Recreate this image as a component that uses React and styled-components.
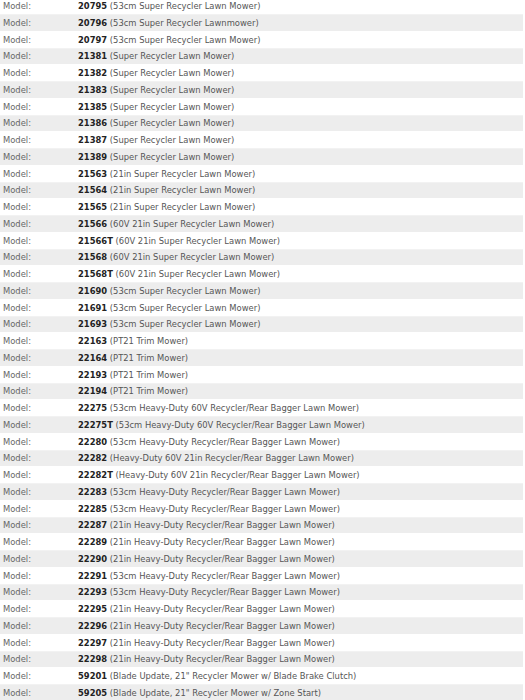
import React from 'react';
import styled, { createGlobalStyle } from 'styled-components';

const GlobalStyle = createGlobalStyle`
    body {
        margin: 0;
        background: #ffffff;
        font-family: "DejaVu Sans", Verdana, sans-serif;
    }
`;

const Table = styled.div`
    width: 523px;
    margin-top: -2.75px;
    overflow: hidden;
`;

const Row = styled.div`
    display: flex;
    align-items: center;
    height: 16.75px;
    box-sizing: border-box;
    font-size: 8.4px;
    background: ${(p) => (p.$alt ? '#ededed' : '#ffffff')};
    border-top: 1px solid ${(p) => (p.$alt ? '#f2f2f2' : '#ffffff')};
`;

const Label = styled.span`
    width: 75px;
    padding-left: 3px;
    color: #666666;
`;

const Num = styled.b`
    color: #222222;
    font-weight: bold;
`;

const Desc = styled.span`
    color: #555555;
    white-space: pre;
`;

const models = [
    ['20795', '53cm Super Recycler Lawn Mower'],
    ['20796', '53cm Super Recycler Lawnmower'],
    ['20797', '53cm Super Recycler Lawn Mower'],
    ['21381', 'Super Recycler Lawn Mower'],
    ['21382', 'Super Recycler Lawn Mower'],
    ['21383', 'Super Recycler Lawn Mower'],
    ['21385', 'Super Recycler Lawn Mower'],
    ['21386', 'Super Recycler Lawn Mower'],
    ['21387', 'Super Recycler Lawn Mower'],
    ['21389', 'Super Recycler Lawn Mower'],
    ['21563', '21in Super Recycler Lawn Mower'],
    ['21564', '21in Super Recycler Lawn Mower'],
    ['21565', '21in Super Recycler Lawn Mower'],
    ['21566', '60V 21in Super Recycler Lawn Mower'],
    ['21566T', '60V 21in Super Recycler Lawn Mower'],
    ['21568', '60V 21in Super Recycler Lawn Mower'],
    ['21568T', '60V 21in Super Recycler Lawn Mower'],
    ['21690', '53cm Super Recycler Lawn Mower'],
    ['21691', '53cm Super Recycler Lawn Mower'],
    ['21693', '53cm Super Recycler Lawn Mower'],
    ['22163', 'PT21 Trim Mower'],
    ['22164', 'PT21 Trim Mower'],
    ['22193', 'PT21 Trim Mower'],
    ['22194', 'PT21 Trim Mower'],
    ['22275', '53cm Heavy-Duty 60V Recycler/Rear Bagger Lawn Mower'],
    ['22275T', '53cm Heavy-Duty 60V Recycler/Rear Bagger Lawn Mower'],
    ['22280', '53cm Heavy-Duty Recycler/Rear Bagger Lawn Mower'],
    ['22282', 'Heavy-Duty 60V 21in Recycler/Rear Bagger Lawn Mower'],
    ['22282T', 'Heavy-Duty 60V 21in Recycler/Rear Bagger Lawn Mower'],
    ['22283', '53cm Heavy-Duty Recycler/Rear Bagger Lawn Mower'],
    ['22285', '53cm Heavy-Duty Recycler/Rear Bagger Lawn Mower'],
    ['22287', '21in Heavy-Duty Recycler/Rear Bagger Lawn Mower'],
    ['22289', '21in Heavy-Duty Recycler/Rear Bagger Lawn Mower'],
    ['22290', '21in Heavy-Duty Recycler/Rear Bagger Lawn Mower'],
    ['22291', '53cm Heavy-Duty Recycler/Rear Bagger Lawn Mower'],
    ['22293', '53cm Heavy-Duty Recycler/Rear Bagger Lawn Mower'],
    ['22295', '21in Heavy-Duty Recycler/Rear Bagger Lawn Mower'],
    ['22296', '21in Heavy-Duty Recycler/Rear Bagger Lawn Mower'],
    ['22297', '21in Heavy-Duty Recycler/Rear Bagger Lawn Mower'],
    ['22298', '21in Heavy-Duty Recycler/Rear Bagger Lawn Mower'],
    ['59201', 'Blade Update, 21" Recycler Mower w/ Blade Brake Clutch'],
    ['59205', 'Blade Update, 21" Recycler Mower w/ Zone Start'],
];

const App = () => {
    return (
        <>
            <GlobalStyle />
            <Table>
                {models.map(([num, desc], i) => (
                    <Row key={num} $alt={i % 2 === 1}>
                        <Label>Model:</Label>
                        <Num>{num}</Num>
                        <Desc> ({desc})</Desc>
                    </Row>
                ))}
            </Table>
        </>
    );
};

export default App;
